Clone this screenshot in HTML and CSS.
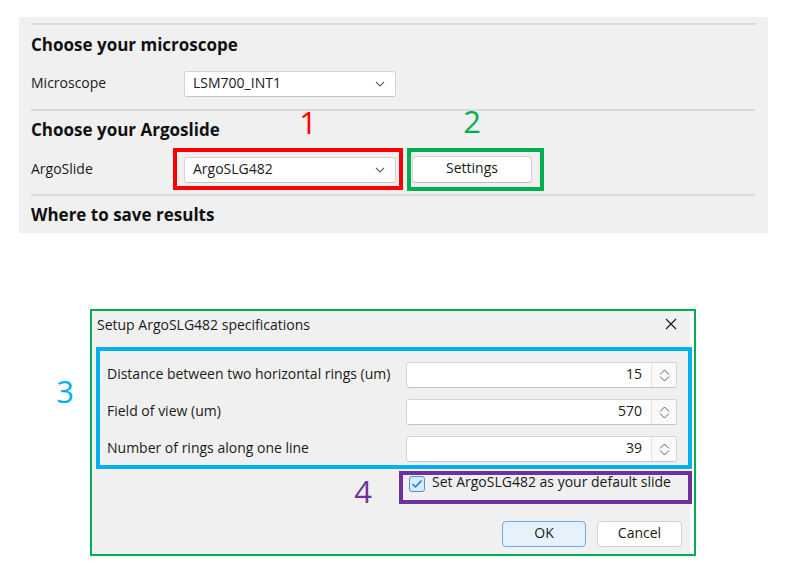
FILE: index.html
```html
<!DOCTYPE html>
<html>
<head>
<meta charset="utf-8">
<link rel="stylesheet" href="styles.css">
</head>
<body>
<div class="page">
  <section class="panel">
    <div class="sep"></div>
    <h2 class="heading">Choose your microscope</h2>
    <div class="row">
      <span class="label">Microscope</span>
      <div class="combo">
        <span class="combo-text">LSM700_INT1</span>
        <svg class="chev" width="10" height="6" viewBox="0 0 10 6"><polyline points="1,1 5,5 9,1" fill="none" stroke="#5f5f5f" stroke-width="1.1"/></svg>
      </div>
    </div>
    <div class="sep sep-2"></div>
    <h2 class="heading heading-2">Choose your Argoslide</h2>
    <div class="row row-slide">
      <span class="label">ArgoSlide</span>
      <div class="combo">
        <span class="combo-text">ArgoSLG482</span>
        <svg class="chev" width="10" height="6" viewBox="0 0 10 6"><polyline points="1,1 5,5 9,1" fill="none" stroke="#5f5f5f" stroke-width="1.1"/></svg>
      </div>
      <button class="btn btn-settings">Settings</button>
      <div class="mark mark-red"></div>
      <div class="mark mark-green"></div>
      <span class="num num-1">1</span>
      <span class="num num-2">2</span>
    </div>
    <div class="sep sep-3"></div>
    <h2 class="heading heading-3">Where to save results</h2>
  </section>

  <section class="dialog">
    <div class="win">
      <div class="titlebar">
        <span class="title">Setup ArgoSLG482 specifications</span>
        <svg class="close" width="12" height="12" viewBox="0 0 12 12"><path d="M1 1 L11 11 M11 1 L1 11" stroke="#1a1a1a" stroke-width="1.2" fill="none"/></svg>
      </div>
      <div class="fields">
        <span class="flabel">Distance between two horizontal rings (um)</span>
        <div class="spin"><span class="spin-val">15</span><span class="spin-btn"><svg width="11" height="13" viewBox="0 0 11 13"><polyline points="1,5.5 5.5,1 10,5.5" fill="none" stroke="#5f5f5f" stroke-width="1"/><polyline points="1,7.5 5.5,12 10,7.5" fill="none" stroke="#5f5f5f" stroke-width="1"/></svg></span></div>
        <span class="flabel">Field of view (um)</span>
        <div class="spin"><span class="spin-val">570</span><span class="spin-btn"><svg width="11" height="13" viewBox="0 0 11 13"><polyline points="1,5.5 5.5,1 10,5.5" fill="none" stroke="#5f5f5f" stroke-width="1"/><polyline points="1,7.5 5.5,12 10,7.5" fill="none" stroke="#5f5f5f" stroke-width="1"/></svg></span></div>
        <span class="flabel">Number of rings along one line</span>
        <div class="spin"><span class="spin-val">39</span><span class="spin-btn"><svg width="11" height="13" viewBox="0 0 11 13"><polyline points="1,5.5 5.5,1 10,5.5" fill="none" stroke="#5f5f5f" stroke-width="1"/><polyline points="1,7.5 5.5,12 10,7.5" fill="none" stroke="#5f5f5f" stroke-width="1"/></svg></span></div>
        <div class="mark mark-blue"></div>
        <span class="num num-3">3</span>
      </div>
      <div class="check-row">
        <span class="checkbox"><svg width="12" height="10" viewBox="0 0 12 10"><polyline points="1.5,5 4.5,8 10.5,1.5" fill="none" stroke="#1a73d1" stroke-width="1.4"/></svg></span>
        <span class="check-text">Set ArgoSLG482 as your default slide</span>
        <div class="mark mark-purple"></div>
        <span class="num num-4">4</span>
      </div>
      <div class="buttons">
        <button class="btn btn-ok">OK</button>
        <button class="btn btn-cancel">Cancel</button>
      </div>
    </div>
  </section>
</div>
</body>
</html>
```

FILE: styles.css
```css
* { box-sizing: border-box; }
html, body { margin: 0; padding: 0; background: #ffffff; }
body {
  font-family: "Open Sans", "Noto Sans", sans-serif;
  font-size: 14px;
  color: #1a1a1a;
}
.page { padding-top: 17px; }

.panel {
  margin-left: 19px;
  width: 749px;
  height: 216px;
  background: #f0f0f0;
  padding: 6px 13px 0 12px;
}
.sep { height: 2px; background: #dadada; }
.sep-2 { margin-top: 12px; }
.sep-3 { margin-top: 11px; }

.heading {
  margin: 8px 0 0 0;
  font-size: 17px;
  font-weight: 700;
  line-height: 24px;
  height: 24px;
  color: #111;
}
.heading-2, .heading-3 { margin-top: 7px; }

.row {
  position: relative;
  display: flex;
  align-items: center;
  height: 26px;
  margin-top: 14px;
}
.row-slide { margin-top: 15px; }
.label { width: 153px; line-height: 20px; padding-bottom: 3px; }

.combo {
  width: 212px;
  height: 26px;
  background: #fff;
  border: 1px solid #d4d4d4;
  border-bottom-color: #c4c4c4;
  border-radius: 3px;
  display: flex;
  align-items: center;
  justify-content: space-between;
  padding: 0 10px 0 8px;
  line-height: 20px;
}
.combo-text { padding-bottom: 3px; }
.chev { display: block; }

.btn {
  font-family: inherit;
  font-size: 14px;
  color: #1a1a1a;
  background: #fff;
  border: 1px solid #d0d0d0;
  border-radius: 4px;
  padding: 0 0 3px 0;
  line-height: 20px;
}
.btn-settings {
  margin-left: 16px;
  width: 120px;
  height: 27px;
  margin-top: -1px;
  border-bottom-color: #bcbcbc;
}

.mark { position: absolute; border-style: solid; border-width: 4px; pointer-events: none; }
.mark-red { border-color: #ff0000; left: 142px; top: -9px; width: 230px; height: 42px; }
.mark-green { border-color: #00b050; left: 376px; top: -9px; width: 137px; height: 43px; }
.mark-blue { border-color: #00b0f0; left: -11px; top: -15px; width: 596px; height: 122px; }
.mark-purple { border-color: #7030a0; left: -10px; top: -5px; width: 293px; height: 33px; }

.num {
  position: absolute;
  font-size: 31px;
  line-height: 31px;
  width: 20px;
  text-align: center;
  font-weight: 400;
}
.num-1 { color: #ff0000; left: 267px; top: -50px; }
.num-2 { color: #00b050; left: 431px; top: -51px; }
.num-3 { color: #00b0f0; left: -52px; top: 14px; }
.num-4 { color: #7030a0; left: -56px; top: 0px; }

.dialog {
  margin: 76px 0 0 90px;
  width: 606px;
  height: 247px;
  border: 2px solid #00b050;
  background: #ffffff;
}
.win {
  height: 100%;
  margin-right: 4px;
  background: #f0f0f0;
  display: flex;
  flex-direction: column;
}
.titlebar {
  height: 28px;
  display: flex;
  align-items: center;
  justify-content: space-between;
  padding: 0 13px 0 5px;
}
.title { line-height: 20px; padding-bottom: 1px; }
.close { display: block; margin-top: -2px; }

.fields {
  position: relative;
  margin: 23px 0 0 15px;
  display: grid;
  grid-template-columns: 299px 271px;
  grid-auto-rows: 26px;
  row-gap: 11px;
  align-items: center;
}
.flabel { line-height: 20px; padding-bottom: 3px; }
.spin {
  height: 26px;
  background: #fff;
  border: 1px solid #d4d4d4;
  border-bottom-color: #c4c4c4;
  border-radius: 3px;
  display: flex;
}
.spin-val {
  flex: 1;
  text-align: right;
  padding: 0 9px 2px 0;
  line-height: 22px;
}
.spin-btn {
  width: 25px;
  border-left: 1px solid #e2e2e2;
  background: #fafafa;
  display: flex;
  align-items: center;
  justify-content: center;
  border-radius: 0 3px 3px 0;
}
.spin-btn svg { display: block; }

.check-row {
  position: relative;
  margin: 14px 0 0 317px;
  display: flex;
  align-items: center;
  height: 16px;
}
.checkbox {
  width: 16px;
  height: 16px;
  border: 1px solid #4a94dc;
  border-radius: 3px;
  background: #d9eafa;
  display: flex;
  align-items: center;
  justify-content: center;
}
.check-text { margin-left: 7px; line-height: 20px; margin-top: -4px; }

.buttons {
  margin-top: 29px;
  display: flex;
  justify-content: flex-end;
  gap: 11px;
  padding-right: 8px;
}
.btn-ok {
  width: 84px;
  height: 26px;
  background: #e5f1fb;
  border-color: #6fa9e3;
}
.btn-cancel {
  width: 85px;
  height: 26px;
}
```
